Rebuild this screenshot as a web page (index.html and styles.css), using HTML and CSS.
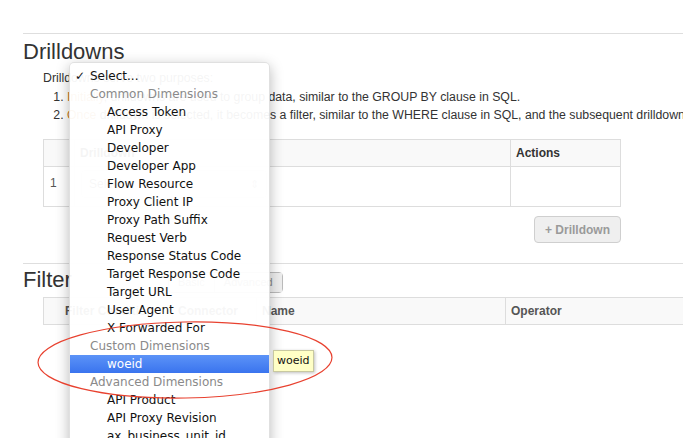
FILE: index.html
```html
<!DOCTYPE html>
<html>
<head>
<meta charset="utf-8">
<link rel="stylesheet" href="styles.css">
</head>
<body>
<div class="page">
  <section class="section">
    <h2 class="title">Drilldowns</h2>
    <div class="intro">
      <p class="lead">Drilldowns serve two purposes:</p>
      <ol class="steps">
        <li><span class="em">Initially</span>, drilldowns are used to group data, similar to the GROUP BY clause in SQL.</li>
        <li><span class="em">Once</span> drilldown is selected, it becomes a filter, similar to the WHERE clause in SQL, and the subsequent drilldown <span class="link">lets you group further.</span></li>
      </ol>
    </div>
    <table class="grid dd">
      <thead>
        <tr><th class="c-num"></th><th class="c-dim">Drilldown</th><th class="c-act">Actions</th></tr>
      </thead>
      <tbody>
        <tr><td class="c-num">1</td><td class="c-dim"><div class="select">Select...<span class="arrows">&#8661;</span></div></td><td class="c-act"></td></tr>
      </tbody>
    </table>
    <div class="btn-row"><button class="btn">+ Drilldown</button></div>
  </section>
  <section class="section">
    <div class="filter-head">
      <h2 class="title">Filter</h2>
      <div class="seg"><span class="seg-btn">Basic</span><span class="seg-btn on">Advanced</span></div>
    </div>
    <table class="grid ft">
      <thead>
        <tr><th class="f1">Filter Condition</th><th class="f2">Connector</th><th class="f3">Name</th><th class="f4">Operator</th></tr>
      </thead>
    </table>
  </section>
</div>

<div class="menu">
  <div class="opt sel"><span class="chk">&#10003;</span>Select...</div>
  <div class="grp">Common Dimensions</div>
  <div class="opt">Access Token</div>
  <div class="opt">API Proxy</div>
  <div class="opt">Developer</div>
  <div class="opt">Developer App</div>
  <div class="opt">Flow Resource</div>
  <div class="opt">Proxy Client IP</div>
  <div class="opt">Proxy Path Suffix</div>
  <div class="opt">Request Verb</div>
  <div class="opt">Response Status Code</div>
  <div class="opt">Target Response Code</div>
  <div class="opt">Target URL</div>
  <div class="opt">User Agent</div>
  <div class="opt">X Forwarded For</div>
  <div class="grp">Custom Dimensions</div>
  <div class="opt hi">woeid</div>
  <div class="grp">Advanced Dimensions</div>
  <div class="opt">API Product</div>
  <div class="opt">API Proxy Revision</div>
  <div class="opt">ax_business_unit_id</div>
  <div class="opt">ax_cache_executed</div>
</div>
<div class="tip">woeid</div>
<svg class="ring" width="683" height="438" viewBox="0 0 683 438">
  <ellipse cx="185" cy="360" rx="147" ry="38" fill="none" stroke="#e8412f" stroke-width="1.2" transform="rotate(-1 185 360)"/>
</svg>
</body>
</html>
```
FILE: styles.css
```css
html, body {
  margin: 0;
  padding: 0;
  background: #fff;
  overflow: hidden;
  width: 683px;
  height: 438px;
}
body {
  font-family: "Liberation Sans", Arial, sans-serif;
  font-size: 12px;
  color: #333;
  position: relative;
}
.page {
  width: 900px;
  padding-top: 33px;
  padding-left: 23px;
}
.section {
  border-top: 1px solid #dedede;
}
.title {
  margin: 5px 0 0 0;
  font-size: 22px;
  line-height: 26px;
  font-weight: normal;
  color: #333;
}
.intro {
  margin: 4px 0 0 20px;
  line-height: 18px;
  font-size: 12.3px;
  white-space: nowrap;
}
.lead {
  margin: 0;
}
.steps {
  margin: 1px 0 0 0;
  padding-left: 24px;
}
.em { color: #c77a1b; }
.link { color: #d7871c; }
.grid {
  border-collapse: collapse;
  margin-left: 20px;
}
.grid th {
  background: #f9f9f9;
  text-align: left;
  font-size: 12px;
  font-weight: bold;
  height: 26px;
  padding: 0 5px;
  border: 1px solid #dddddd;
}
.grid td {
  box-sizing: border-box;
  border: 1px solid #dddddd;
  height: 40px;
  padding: 0 6px;
  vertical-align: top;
}
.dd {
  margin-top: 15px;
  width: 578px;
}
.dd .c-num { width: 20px; }
.dd .c-act { width: 99px; }
.dd th { color: #333; }
.dd td.c-num { padding-top: 9px; color: #555; }
.dd td.c-dim { padding-top: 3px; }
.select {
  width: 170px;
  height: 26px;
  border: 1px solid #e3e3e3;
  border-radius: 4px;
  line-height: 26px;
  padding: 0 7px;
  color: #666;
  display: flex;
  justify-content: space-between;
}
.arrows { color: #999; font-size: 11px; }
.btn-row {
  width: 578px;
  margin-left: 20px;
  display: flex;
  justify-content: flex-end;
  margin-top: 9px;
  padding-bottom: 20px;
}
.btn {
  width: 87px;
  height: 27px;
  border: 1px solid #cfcfcf;
  border-radius: 4px;
  background: #efefef;
  color: #9a9a9a;
  font-family: "Liberation Sans", Arial, sans-serif;
  font-weight: bold;
  font-size: 12px;
  padding: 0;
}
.filter-head {
  display: flex;
  align-items: flex-start;
  gap: 96px;
}
.filter-head .title { margin-top: 3px; }
.seg {
  display: flex;
  margin-top: 8px;
  border: 1px solid #bbb;
  border-radius: 4px;
  height: 19px;
  font-size: 11px;
  color: #888;
}
.seg-btn { padding: 0 9px; line-height: 19px; }
.seg-btn.on { border-left: 1px solid #ccc; background: #eee; }
.ft {
  margin-top: 4px;
  width: 900px;
}
.ft th { color: #555; }
.ft .f1 { width: 102px; padding-left: 21px; }
.ft .f2 { width: 73px; border-left: none; }
.ft .f3 { width: 238px; }

.menu {
  position: absolute;
  left: 69px;
  top: 62px;
  width: 201px;
  height: 400px;
  padding-top: 4px;
  background: rgba(255, 255, 255, 0.95);
  border: 1px solid rgba(0, 0, 0, 0.12);
  border-radius: 5px;
  box-shadow: 0 4px 14px rgba(0, 0, 0, 0.28);
  font-family: "DejaVu Sans", "Lucida Grande", sans-serif;
  font-size: 12px;
  color: #111;
  overflow: hidden;
  box-sizing: border-box;
}
.opt, .grp {
  height: 18px;
  line-height: 18px;
  white-space: nowrap;
}
.opt { padding-left: 37px; }
.grp { padding-left: 20px; color: #8a8a8a; }
.opt.sel { padding-left: 5px; }
.chk { display: inline-block; width: 15px; }
.opt.hi {
  background: linear-gradient(#5c93f7, #3a74ee);
  color: #fff;
}
.tip {
  position: absolute;
  left: 273px;
  top: 350px;
  height: 20px;
  line-height: 20px;
  padding: 0 3px;
  background: #ffffc6;
  border: 1px solid #c8c8a0;
  box-shadow: 1px 1px 3px rgba(0, 0, 0, 0.25);
  font-family: "DejaVu Sans", sans-serif;
  font-size: 11px;
  color: #111;
}
.ring {
  position: absolute;
  left: 0;
  top: 0;
  pointer-events: none;
}
```
